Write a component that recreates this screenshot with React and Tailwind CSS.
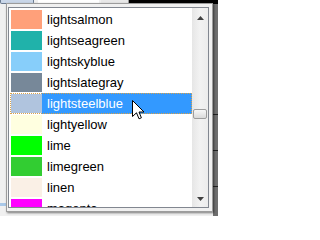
import React from "react";

const colors = [
  ["lightsalmon", "#FFA07A"],
  ["lightseagreen", "#20B2AA"],
  ["lightskyblue", "#87CEFA"],
  ["lightslategray", "#778899"],
  ["lightsteelblue", "#B0C4DE"],
  ["lightyellow", "#FFFFE0"],
  ["lime", "#00FF00"],
  ["limegreen", "#32CD32"],
  ["linen", "#FAF0E6"],
  ["magenta", "#FF00FF"],
];

function ColorRow({ name, hex, selected }) {
  return (
    <div className="h-[21px] pl-[1px] shrink-0">
      <div className="relative flex h-[21px] w-[182px] items-center">
        <div className="ml-[1px] h-[19px] w-[31px] shrink-0" style={{ backgroundColor: hex }} />
        <div
          className={
            selected
              ? "flex h-[21px] flex-1 items-center bg-[#3399ff] pl-[5px] text-white"
              : "flex h-[21px] flex-1 items-center pl-[5px] text-black"
          }
        >
          {name}
        </div>
        {selected && (
          <div className="pointer-events-none absolute inset-0 border border-dotted border-[#d9a24a]" />
        )}
      </div>
    </div>
  );
}

function Arrow({ down }) {
  return (
    <svg width="7" height="4" viewBox="0 0 7 4" className="block">
      {down ? <path d="M0 0H7L3.5 4Z" fill="#404040" /> : <path d="M0 4H7L3.5 0Z" fill="#404040" />}
    </svg>
  );
}

export default function App() {
  return (
    <div
      className="relative h-[216px] w-[218px] overflow-hidden bg-[#f0f0f0] text-[13px]"
      style={{ fontFamily: '"Liberation Sans", Arial, sans-serif' }}
    >
      {/* window behind the popup */}
      <div className="flex h-[4px]">
        <div className="w-[34px] rounded-b-[2px] border border-t-0 border-[#6a7a90] bg-[#c9d6e8]" />
        <div className="w-[4px]" />
        <div className="w-[61px] border-b border-[#d0d0d0] bg-white" />
        <div className="w-[2px]" />
        <div className="w-[28px] border-r border-[#9a9a9a] bg-[#e8e8e8]" />
        <div className="flex-1 bg-black" />
      </div>
      <div className="flex h-[212px]">
        <div className="flex w-[213px] flex-col justify-end">
          <div className="mb-[10px] h-[3px] w-[6px] bg-[#a9c8e8]" />
        </div>
        <div className="flex flex-1 flex-col gap-[35px] bg-[#6e6e6e] pt-[110px]">
          <div className="h-[1px] bg-[#222]" />
          <div className="h-[1px] bg-[#222]" />
          <div className="h-[1px] bg-[#222]" />
        </div>
      </div>

      {/* dropdown popup */}
      <div className="absolute left-[6px] top-[3px] flex h-[209px] w-[207px] border border-[#9c9c9c] bg-[#f0f0f0] pb-[3px] pl-[1px] pr-[3px] pt-[3px] shadow-[1px_1px_2px_rgba(0,0,0,0.5)]">
        <div className="flex h-[201px] w-[201px] border border-[#828790] bg-white">
          <div className="flex h-[199px] w-[183px] flex-col overflow-hidden pt-[1px]">
            {colors.map(([name, hex], i) => (
              <ColorRow key={name} name={name} hex={hex} selected={i === 4} />
            ))}
          </div>
          {/* scrollbar */}
          <div className="flex h-[199px] w-[16px] flex-col items-center bg-gradient-to-r from-[#e6e6e6] via-[#f2f2f2] to-[#ececec] pb-[6px] pt-[8px]">
            <Arrow />
            <div className="mt-[89px] h-[10px] w-[14px] rounded-[2px] border border-[#9d9d9d] bg-gradient-to-b from-[#f8f8f8] to-[#dadada]" />
            <div className="flex-1" />
            <Arrow down />
          </div>
        </div>
      </div>

      {/* mouse cursor */}
      <svg width="13" height="20" viewBox="0 0 13 20" className="absolute left-[132px] top-[100px]">
        <path
          d="M0.5 0.5V16.5L4.5 12.8L7 18.8L9.4 17.8L7 12H12Z"
          fill="white"
          stroke="black"
          strokeWidth="1"
          strokeLinejoin="miter"
        />
      </svg>
    </div>
  );
}
